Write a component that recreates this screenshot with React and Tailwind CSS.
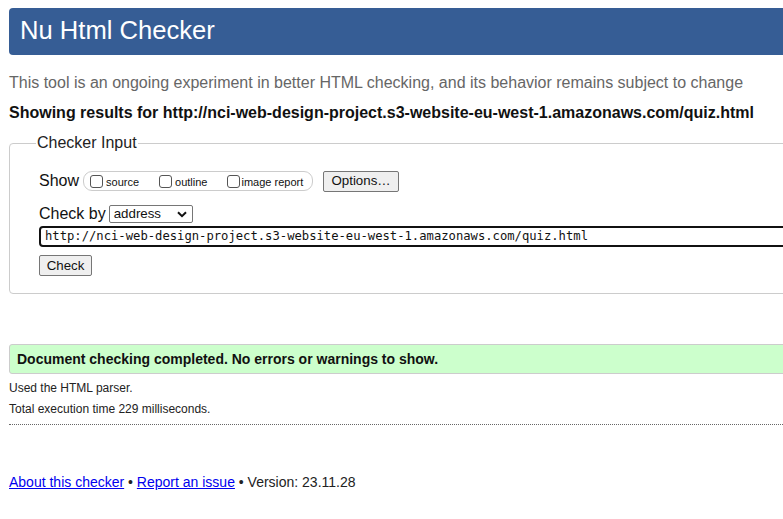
import React from "react";

const App = () => {
  return (
    <div className="w-[783px] h-[519px] overflow-hidden bg-white font-['Liberation_Sans',Arial,sans-serif] text-[#111]">
      <div className="w-[860px] pl-[9px] pt-[8px]">
        {/* Title bar */}
        <header className="h-[47px] bg-[#365d95] rounded-[4px] flex items-center pl-[11px]">
          <h1 className="text-[25.6px] text-white leading-none pb-[2px]">Nu Html Checker</h1>
        </header>

        <p className="mt-[19px] text-[16px] leading-[18px] text-[#666]">
          This tool is an ongoing experiment in better HTML checking, and its behavior remains subject to change
        </p>
        <p className="mt-[12px] text-[16px] leading-[18px] font-bold text-[#111]">
          Showing results for http://nci-web-design-project.s3-website-eu-west-1.amazonaws.com/quiz.html
        </p>

        {/* Checker input */}
        <fieldset className="mt-[12px] h-[160px] border border-[#ccc] rounded-[4px] pl-[29px] pr-[10px]">
          <legend className="-ml-[3px] px-[1px] text-[16px] leading-[18px] text-[#222]">Checker Input</legend>

          <div className="mt-[18px] flex items-center h-[22px]">
            <span className="text-[16px] leading-[18px] mr-[4px]">Show</span>
            <div className="flex items-center h-[20px] w-[230px] border border-[#ccc] rounded-[9px] pl-[6px] text-[11px]">
              <span className="w-[13px] h-[13px] border border-[#555] rounded-[3px] bg-white" />
              <span className="ml-[3px] mt-[3px]">source</span>
              <span className="ml-[20px] w-[13px] h-[13px] border border-[#555] rounded-[3px] bg-white" />
              <span className="ml-[3px] mt-[3px]">outline</span>
              <span className="ml-[20px] w-[13px] h-[13px] border border-[#555] rounded-[3px] bg-white" />
              <span className="ml-[1px] mt-[3px]">image report</span>
            </div>
            <button className="ml-[10px] h-[21px] w-[76px] border border-[#767676] rounded-[2px] bg-[#efefef] text-[13.3px] text-[#111] leading-none">
              Options…
            </button>
          </div>

          <div className="mt-[12px] flex items-center h-[20px]">
            <span className="text-[16px] leading-[18px] mr-[3px]">Check by</span>
            <div className="h-[18px] w-[84px] border border-[#767676] rounded-[2px] bg-white flex items-center justify-between pl-[4px] pr-[5px] text-[13.3px]">
              <span>address</span>
              <svg width="10" height="7" viewBox="0 0 10 7">
                <path d="M1 1.2 L5 5.2 L9 1.2" fill="none" stroke="#111" strokeWidth="2" />
              </svg>
            </div>
          </div>

          <div className="mt-[2px] h-[21px] w-[780px] border-2 border-[#111] rounded-[4px] flex items-center pl-[4px] font-['DejaVu_Sans_Mono',monospace] text-[12.2px] text-[#111]">
            http://nci-web-design-project.s3-website-eu-west-1.amazonaws.com/quiz.html
          </div>

          <button className="mt-[8px] h-[21px] w-[53px] border border-[#767676] rounded-[2px] bg-[#efefef] text-[13.3px] text-[#111] leading-none">
            Check
          </button>
        </fieldset>

        {/* Result */}
        <div className="mt-[50px] h-[30px] bg-[#ccffcc] border border-[#ccc] rounded-[3px] flex items-center pl-[7px]">
          <p className="text-[14px] font-bold text-[#111]">Document checking completed. No errors or warnings to show.</p>
        </div>
        <p className="mt-[7px] text-[12px] leading-[14px] text-[#222]">Used the HTML parser.</p>
        <p className="mt-[7px] text-[12px] leading-[14px] text-[#222]">Total execution time 229 milliseconds.</p>
        <div className="mt-[8px] w-[774px] border-t border-dotted border-[#666]" />

        {/* Footer */}
        <p className="mt-[49px] text-[14px] leading-[16px] text-[#222]">
          <a href="#" className="text-[#0000ee] underline">About this checker</a>
          {" • "}
          <a href="#" className="text-[#0000ee] underline">Report an issue</a>
          {" • Version: 23.11.28"}
        </p>
      </div>
    </div>
  );
};

export default App;
